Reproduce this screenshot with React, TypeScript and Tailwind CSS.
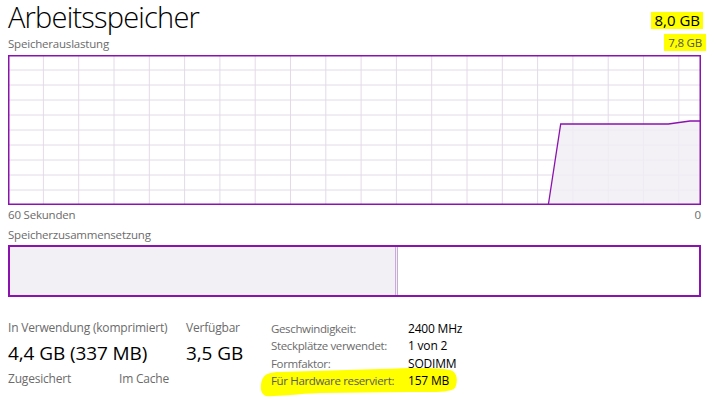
import React from 'react';

const purple = '#8b12ae';

const UsageGraph = () => {
  const w = 693;
  const h = 150;
  const cols = Array.from({ length: 19 }, (_, i) => 35.4 + i * 35.3);
  const rows = Array.from({ length: 9 }, (_, i) => 15 + i * 15);
  const area = 'M540.3 150 L552.7 69 L660.3 69 L682 66 L693 66 L693 150 Z';
  const line = 'M540.3 150 L552.7 69 L660.3 69 L682 66 L693 66';
  return (
    <svg width={w} height={h} viewBox={`0 0 ${w} ${h}`} className="block">
      {cols.map((x) => (
        <line key={`c${x}`} x1={x} y1={0} x2={x} y2={h} stroke="#e3dae8" strokeWidth={1} />
      ))}
      {rows.map((y) => (
        <line key={`r${y}`} x1={0} y1={y} x2={w} y2={y} stroke="#e3dae8" strokeWidth={1} />
      ))}
      <path d={area} fill="#f1edf4" fillOpacity={0.85} />
      <path d={line} fill="none" stroke={purple} strokeWidth={1.3} />
      <rect x={0.75} y={0.75} width={w - 1.5} height={h - 1.5} fill="none" stroke={purple} strokeWidth={1.5} />
    </svg>
  );
};

const specs = [
  { label: 'Geschwindigkeit:', value: '2400 MHz' },
  { label: 'Steckplätze verwendet:', value: '1 von 2' },
  { label: 'Formfaktor:', value: 'SODIMM' },
];

const App = () => {
  return (
    <div
      className="w-[716px] h-[401px] overflow-hidden whitespace-nowrap bg-white pl-[8px] pr-[15px] text-black"
      style={{ fontFamily: '"Open Sans", "Noto Sans", sans-serif' }}
    >
      <div className="flex h-[34px] items-start justify-between">
        <h1 className="pr-[2px] text-[29px] font-light leading-[34px] tracking-[-0.8px]">Arbeitsspeicher</h1>
        <span className="mt-[12px] -mr-[2px] bg-[#ffff00] px-[3px] text-[15px] leading-[17px]">8,0 GB</span>
      </div>

      <div className="flex h-[21px] items-start justify-between text-[11.5px] tracking-[-0.2px] text-[#6b6b6b]">
        <span className="mt-[3px] leading-[14px]">Speicherauslastung</span>
        <span className="-mr-[5px] bg-[#ffff00] px-[4px] py-[1px] leading-[15px] text-[#555]">7,8 GB</span>
      </div>

      <UsageGraph />

      <div className="flex h-[20px] items-center justify-between text-[11.5px] tracking-[-0.2px] text-[#6b6b6b]">
        <span>60 Sekunden</span>
        <span>0</span>
      </div>
      <div className="flex h-[20px] items-center text-[11.5px] tracking-[-0.2px] text-[#6b6b6b]">
        <span>Speicherzusammensetzung</span>
      </div>

      <div className="flex h-[52px] border-2 border-[#8b12ae]">
        <div className="w-[385px] bg-[#f2eff5]" />
        <div className="w-[3px] border-x border-[#c8abd6] bg-[#f2eff5]" />
        <div className="flex-1 bg-white" />
      </div>

      <div className="mt-[23px] flex tracking-[-0.2px]">
        <div className="w-[263px]">
          <div className="flex text-[12px] leading-[16px] text-[#6b6b6b]">
            <span className="w-[178px]">In Verwendung (komprimiert)</span>
            <span>Verfügbar</span>
          </div>
          <div className="mt-[5px] flex text-[19px] leading-[24px] tracking-[-0.1px]">
            <span className="w-[178px]">4,4 GB (337 MB)</span>
            <span>3,5 GB</span>
          </div>
          <div className="mt-[6px] flex text-[12px] leading-[16px] text-[#6b6b6b]">
            <span className="w-[111px]">Zugesichert</span>
            <span>Im Cache</span>
          </div>
        </div>

        <div className="flex flex-col text-[12px] leading-[17.3px]">
          {specs.map((s) => (
            <div key={s.label} className="flex">
              <span className="w-[137px] text-[11.5px] tracking-[-0.35px] text-[#6b6b6b]">{s.label}</span>
              <span>{s.value}</span>
            </div>
          ))}
          <div className="relative flex">
            <svg
              className="absolute -left-[11px] -top-[6px]"
              width={200}
              height={32}
              viewBox="0 0 200 32"
            >
              <path
                d="M2 14 C4 8 10 6 20 6 L120 3 C150 2 175 1 190 4 C198 6 198 16 195 22 C190 27 170 26 150 26 L60 27 C35 28 14 31 6 30 C0 28 0 20 2 14 Z"
                fill="#ffff00"
              />
            </svg>
            <span className="relative w-[137px] text-[11.5px] tracking-[-0.35px] text-[#5a5a5a]">
              Für Hardware reserviert:
            </span>
            <span className="relative">157 MB</span>
          </div>
        </div>
      </div>
    </div>
  );
};

export default App;
